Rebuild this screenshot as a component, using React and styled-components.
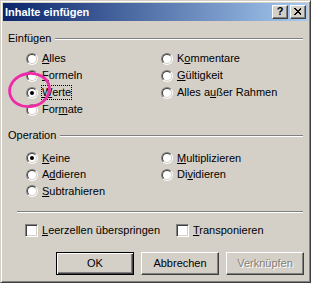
import React from 'react'
import styled, { createGlobalStyle } from 'styled-components'

const GlobalStyle = createGlobalStyle`
    html, body {
        margin: 0;
        padding: 0;
        background: #d4d0c8;
    }
    body {
        font-family: Tahoma, "Liberation Sans", Arial, sans-serif;
        font-size: 11px;
        color: #000;
    }
`

const Window = styled.div`
    position: relative;
    box-sizing: border-box;
    width: 311px;
    height: 283px;
    padding: 2px;
    background: #d4d0c8;
    border: 1px solid;
    border-color: #d4d0c8 #404040 #404040 #d4d0c8;
    box-shadow: inset 1px 1px 0 #fff, inset -1px -1px 0 #808080;
    display: flex;
    flex-direction: column;
`

const TitleBar = styled.div`
    height: 18px;
    display: flex;
    align-items: center;
    padding: 0 2px;
    background: linear-gradient(to right, #0a246a, #a6caf0);
`

const TitleText = styled.div`
    flex: 1;
    color: #fff;
    font-weight: bold;
    font-size: 11px;
    line-height: 18px;
    white-space: nowrap;
`

const TitleButtons = styled.div`
    display: flex;
    gap: 2px;
`

const TitleButton = styled.div`
    box-sizing: border-box;
    width: 16px;
    height: 14px;
    background: #d4d0c8;
    border: 1px solid;
    border-color: #fff #404040 #404040 #fff;
    box-shadow: inset -1px -1px 0 #808080;
    display: flex;
    align-items: center;
    justify-content: center;
    font-weight: bold;
    font-size: 11px;
    line-height: 1;
    padding-bottom: 1px;
`

const GroupHeader = styled.div`
    display: flex;
    align-items: center;
    gap: 4px;
    height: 13px;
    margin-top: ${(p) => p.$top}px;
    padding: 0 5px;
    line-height: 13px;
`

const Etched = styled.div`
    flex: 1;
    height: 0;
    border-top: 1px solid #808080;
    border-bottom: 1px solid #fff;
`

const OptionGrid = styled.div`
    display: grid;
    grid-template-columns: 135px 1fr;
    grid-auto-flow: column;
    grid-template-rows: repeat(${(p) => p.$rows}, ${(p) => p.$row}px);
    margin-top: ${(p) => p.$top}px;
    padding-left: 23px;
`

const Option = styled.div`
    display: flex;
    align-items: center;
    gap: 3px;
    white-space: nowrap;
`

const Radio = styled.span`
    position: relative;
    box-sizing: border-box;
    width: 12px;
    height: 12px;
    border-radius: 50%;
    border: 1px solid;
    border-color: #808080 #fff #fff #808080;
    flex: none;

    &::before {
        content: '';
        position: absolute;
        inset: 0;
        border-radius: 50%;
        border: 1px solid;
        border-color: #404040 #d4d0c8 #d4d0c8 #404040;
        background: #fff;
    }

    &::after {
        content: '';
        display: ${(p) => (p.$checked ? 'block' : 'none')};
        position: absolute;
        left: 3px;
        top: 3px;
        width: 4px;
        height: 4px;
        border-radius: 50%;
        background: #000;
    }
`

const Label = styled.span`
    border: 1px ${(p) => (p.$focus ? 'dotted #000' : 'solid transparent')};
    line-height: 13px;
`

const U = styled.span`
    text-decoration: underline;
`

const Separator = styled.div`
    height: 0;
    margin: 11px 5px 0 14px;
    border-top: 1px solid #808080;
    border-bottom: 1px solid #fff;
`

const CheckRow = styled.div`
    display: grid;
    grid-template-columns: 151px 1fr;
    height: 13px;
    margin-top: 11px;
    padding-left: 22px;
`

const CheckOption = styled.div`
    display: flex;
    align-items: center;
    gap: 4px;
    white-space: nowrap;
`

const Checkbox = styled.span`
    box-sizing: border-box;
    width: 13px;
    height: 13px;
    flex: none;
    background: #fff;
    border: 1px solid;
    border-color: #808080 #fff #fff #808080;
    box-shadow: inset 1px 1px 0 #404040, inset -1px -1px 0 #d4d0c8;
`

const ButtonRow = styled.div`
    display: flex;
    justify-content: flex-end;
    gap: 7px;
    margin-top: 15px;
    padding-right: 4px;
`

const Button = styled.div`
    box-sizing: border-box;
    width: 78px;
    height: 23px;
    display: flex;
    align-items: center;
    justify-content: center;
    background: #d4d0c8;
    border: 1px solid;
    border-color: ${(p) =>
        p.$default ? '#000' : '#fff #404040 #404040 #fff'};
    box-shadow: ${(p) =>
        p.$default
            ? 'inset 1px 1px 0 #fff, inset -1px -1px 0 #404040, inset -2px -2px 0 #808080'
            : 'inset -1px -1px 0 #808080'};
    color: ${(p) => (p.$disabled ? '#808080' : '#000')};
    text-shadow: ${(p) => (p.$disabled ? '1px 1px 0 #fff' : 'none')};
`

const Marker = styled.svg`
    position: absolute;
    left: 0;
    top: 60px;
    pointer-events: none;
`

const Dialog = () => {
    return (
        <Window>
            <TitleBar>
                <TitleText>Inhalte einfügen</TitleText>
                <TitleButtons>
                    <TitleButton>?</TitleButton>
                    <TitleButton>
                        <svg width="8" height="7" viewBox="0 0 8 7">
                            <path
                                d="M0.5 0.5 L7 6.5 M1.5 0.5 L7.5 6.5 M7 0.5 L0.5 6.5 M7.5 0.5 L1 6.5"
                                stroke="#000"
                                strokeWidth="1"
                                shapeRendering="crispEdges"
                            />
                        </svg>
                    </TitleButton>
                </TitleButtons>
            </TitleBar>

            <GroupHeader $top={11}>
                Einfügen
                <Etched />
            </GroupHeader>
            <OptionGrid $top={5} $row={17} $rows={4}>
                <Option>
                    <Radio />
                    <Label><U>A</U>lles</Label>
                </Option>
                <Option>
                    <Radio />
                    <Label><U>F</U>ormeln</Label>
                </Option>
                <Option>
                    <Radio $checked />
                    <Label $focus><U>W</U>erte</Label>
                </Option>
                <Option>
                    <Radio />
                    <Label>For<U>m</U>ate</Label>
                </Option>
                <Option>
                    <Radio />
                    <Label>K<U>o</U>mmentare</Label>
                </Option>
                <Option>
                    <Radio />
                    <Label><U>G</U>ültigkeit</Label>
                </Option>
                <Option>
                    <Radio />
                    <Label>Alles a<U>u</U>ßer Rahmen</Label>
                </Option>
            </OptionGrid>

            <GroupHeader $top={11}>
                Operation
                <Etched />
            </GroupHeader>
            <OptionGrid $top={8} $row={16.5} $rows={3}>
                <Option>
                    <Radio $checked />
                    <Label><U>K</U>eine</Label>
                </Option>
                <Option>
                    <Radio />
                    <Label>A<U>d</U>dieren</Label>
                </Option>
                <Option>
                    <Radio />
                    <Label><U>S</U>ubtrahieren</Label>
                </Option>
                <Option>
                    <Radio />
                    <Label><U>M</U>ultiplizieren</Label>
                </Option>
                <Option>
                    <Radio />
                    <Label>Di<U>v</U>idieren</Label>
                </Option>
            </OptionGrid>

            <Separator />

            <CheckRow>
                <CheckOption>
                    <Checkbox />
                    <span><U>L</U>eerzellen überspringen</span>
                </CheckOption>
                <CheckOption>
                    <Checkbox />
                    <span><U>T</U>ransponieren</span>
                </CheckOption>
            </CheckRow>

            <ButtonRow>
                <Button $default>OK</Button>
                <Button>Abbrechen</Button>
                <Button $disabled>Verknüpfen</Button>
            </ButtonRow>

            <Marker width="60" height="60" viewBox="0 0 60 60">
                <ellipse
                    cx="28.5"
                    cy="29"
                    rx="20"
                    ry="16.5"
                    transform="rotate(-10 28.5 29)"
                    fill="none"
                    stroke="#ee2ba6"
                    strokeWidth="2.8"
                />
            </Marker>
        </Window>
    )
}

const App = () => (
    <>
        <GlobalStyle />
        <Dialog />
    </>
)

export default App
